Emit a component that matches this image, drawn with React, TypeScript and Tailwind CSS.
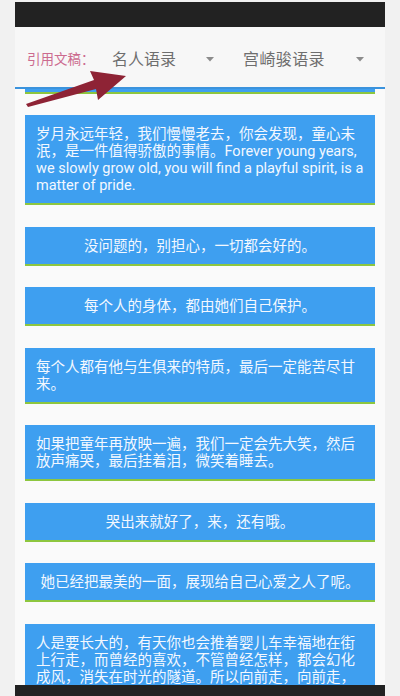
import React from "react";

const cn = '"Roboto", "Noto Sans CJK SC", sans-serif';

type Card = { text: string; center?: boolean };

const cards: Card[] = [
  {
    text: "岁月永远年轻，我们慢慢老去，你会发现，童心未泯，是一件值得骄傲的事情。Forever young years, we slowly grow old, you will find a playful spirit, is a matter of pride.",
  },
  { text: "没问题的，别担心，一切都会好的。", center: true },
  { text: "每个人的身体，都由她们自己保护。", center: true },
  { text: "每个人都有他与生俱来的特质，最后一定能苦尽甘来。" },
  { text: "如果把童年再放映一遍，我们一定会先大笑，然后放声痛哭，最后挂着泪，微笑着睡去。" },
  { text: "哭出来就好了，来，还有哦。", center: true },
  { text: "她已经把最美的一面，展现给自己心爱之人了呢。", center: true },
  {
    text: "人是要长大的，有天你也会推着婴儿车幸福地在街上行走，而曾经的喜欢，不管曾经怎样，都会幻化成风，消失在时光的隧道。所以向前走，向前走，不要回头。",
  },
];

function Caret({ className }: { className?: string }) {
  return (
    <svg width="8" height="5" viewBox="0 0 8 5" className={className}>
      <polygon points="0,0 8,0 4,4.5" fill="#8c8c8c" />
    </svg>
  );
}

export default function App() {
  return (
    <div
      className="relative w-[400px] h-[696px] overflow-hidden bg-[#f1f1f1] px-[15px] pt-[2px]"
      style={{ fontFamily: cn }}
    >
      <div className="flex flex-col h-[694px] bg-[#fafafa]">
        <div className="h-[25px] shrink-0 bg-[#222222]" />
        <div className="h-[60px] shrink-0 flex items-center pt-[5px] pl-[12px] bg-[#f7f7f7]">
          <span className="w-[85px] text-[13.5px] text-[#cc6b8f]">引用文稿：</span>
          <div className="w-[131px] flex items-center">
            <span className="text-[16px] text-[#6e6e6e]">名人语录</span>
            <Caret className="ml-[30px]" />
          </div>
          <div className="flex items-center">
            <span className="text-[16px] tracking-[0.4px] text-[#6e6e6e]">宫崎骏语录</span>
            <Caret className="ml-[31px]" />
          </div>
        </div>
        <div className="flex-1 min-h-0 overflow-hidden flex flex-col">
          <div className="h-[2px] shrink-0 bg-[#3b93dd]" />
          <div className="mx-[10px] h-[5px] shrink-0 bg-[#3e9ff0] border-b-2 border-[#8dc63f]" />
          <div className="flex flex-col gap-[21.5px] pt-[21px]">
            {cards.map((c, i) => (
              <div
                key={i}
                className={`mx-[10px] shrink-0 bg-[#3e9ff0] border-b-2 border-[#8dc63f] px-[11px] pt-[11px] pb-[9px] text-[14.5px] leading-[17px] text-[#f3f8ff] ${
                  c.center ? "text-center" : "text-left"
                }`}
              >
                {c.text}
              </div>
            ))}
          </div>
        </div>
        <div className="h-[11px] shrink-0 bg-[#222222]" />
      </div>
      <svg
        className="absolute left-0 top-0 pointer-events-none"
        width="400"
        height="130"
        viewBox="0 0 400 130"
      >
        <polygon
          points="26,104 94,80 90,71 126,76 98,100 96,89 28,107"
          fill="#8e2335"
        />
      </svg>
    </div>
  );
}
